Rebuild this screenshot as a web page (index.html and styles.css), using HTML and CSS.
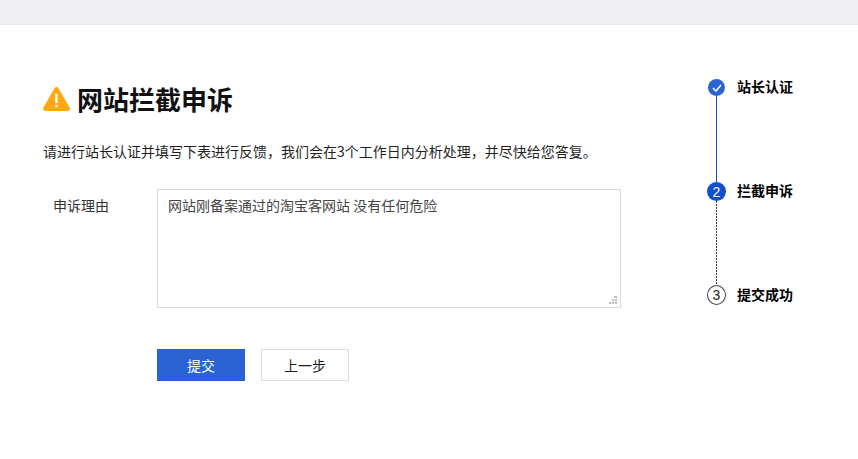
FILE: index.html
```html
<!DOCTYPE html>
<html lang="zh-CN">
<head>
<meta charset="utf-8">
<title>网站拦截申诉</title>
<link rel="stylesheet" href="styles.css">
</head>
<body>
<div class="topbar"></div>
<div class="page">
  <main class="content">
    <h1 class="title">
      <svg class="warn" width="27" height="24" viewBox="1 1.500 26 23.200"><path d="M14 1.500c-.8 0-1.500.4-1.900 1.100L1.300 21.400c-.9 1.500.2 3.300 1.900 3.300h21.600c1.700 0 2.800-1.800 1.900-3.300L15.900 2.600C15.500 1.900 14.800 1.500 14 1.500z" fill="#ffa90f"/><rect x="12.900" y="8" width="2.200" height="9" fill="#fff"/><rect x="12.900" y="18.800" width="2.200" height="2.400" fill="#fff"/></svg>
      <span>网站拦截申诉</span>
    </h1>
    <p class="intro">请进行站长认证并填写下表进行反馈，我们会在3个工作日内分析处理，并尽快给您答复。</p>
    <div class="field">
      <label class="label">申诉理由</label>
      <div class="textarea">网站刚备案通过的淘宝客网站 没有任何危险
        <svg class="grip" width="8" height="8" viewBox="0 0 8 8"><path fill="#bbb" d="M5 0h3v2H5zM3 3h2v2H3zM6 3h2v2H6zM0 6h2v2H0zM3 6h2v2H3zM6 6h2v2H6z"/></svg>
      </div>
    </div>
    <div class="actions">
      <button class="btn primary">提交</button>
      <button class="btn">上一步</button>
    </div>
  </main>
  <aside class="steps">
    <div class="step">
      <span class="dot done"><svg width="10" height="8" viewBox="0 0 10 8"><path d="M1 4l3 3 5-6" fill="none" stroke="#fff" stroke-width="1.500"/></svg></span>
      <span class="step-name">站长认证</span>
    </div>
    <div class="line solid"></div>
    <div class="step">
      <span class="dot current">2</span>
      <span class="step-name">拦截申诉</span>
    </div>
    <div class="line dashed"></div>
    <div class="step">
      <span class="dot todo">3</span>
      <span class="step-name">提交成功</span>
    </div>
  </aside>
</div>
</body>
</html>
```
FILE: styles.css
```css
* { box-sizing: border-box; }
html, body { margin: 0; padding: 0; }
body {
  width: 858px;
  height: 459px;
  overflow: hidden;
  background: #fff;
  color: #000;
  font-family: "Noto Sans CJK SC", "Liberation Sans", sans-serif;
}
.topbar {
  height: 25px;
  background: #f0f0f4;
  border-bottom: 1px solid #e6e6ea;
}
.page {
  display: flex;
  justify-content: space-between;
}
.content {
  padding: 54px 0 0 43px;
  width: 621px;
  box-sizing: content-box;
}
.title {
  display: flex;
  align-items: center;
  gap: 7px;
  height: 40px;
  margin: 0;
  font-size: 26px;
  line-height: 40px;
  font-weight: 700;
  color: #111;
}
.warn { flex: none; }
.intro {
  margin: 22px 0 0;
  font-size: 14px;
  line-height: 20px;
  color: #1f1f1f;
  white-space: nowrap;
}
.field {
  display: flex;
  margin-top: 28px;
}
.label {
  width: 114px;
  padding: 0 0 0 10px;
  font-size: 14px;
  line-height: 33px;
  color: #333;
}
.textarea {
  position: relative;
  width: 464px;
  height: 119px;
  padding: 5px 10px;
  border: 1px solid #d9d9d9;
  font-size: 14px;
  line-height: 20px;
  color: #444;
}
.grip {
  position: absolute;
  right: 3px;
  bottom: 3px;
}
.actions {
  display: flex;
  gap: 16px;
  margin: 41px 0 0 114px;
}
.btn {
  width: 88px;
  height: 32px;
  padding: 0;
  border: 1px solid #dcdcdc;
  background: #fff;
  color: #1c1c1c;
  font-family: inherit;
  font-size: 14px;
}
.btn.primary {
  background: #2b63d3;
  border-color: #2b63d3;
  color: #fff;
}
.steps {
  display: grid;
  grid-template-columns: 19px auto;
  align-content: start;
  width: 151px;
  padding-top: 54px;
  margin-left: auto;
}
.step {
  grid-column: 1 / -1;
  display: grid;
  grid-template-columns: 19px auto;
  align-items: center;
  font-size: 14px;
  font-weight: 700;
  color: #000;
}
.dot {
  display: flex;
  align-items: center;
  justify-content: center;
  justify-self: center;
  border-radius: 50%;
  font-family: "Liberation Sans", sans-serif;
  font-size: 14px;
  font-weight: 400;
}
.dot.done { width: 17px; height: 17px; background: #2b63d3; }
.dot.current { width: 19px; height: 19px; background: #0f4fd0; color: #fff; }
.dot.todo { width: 19px; height: 20px; border: 1px solid #444; color: #222; }
.step-name { margin: -2px 0 0 11px; line-height: 17px; }
.line {
  grid-column: 1;
  width: 1px;
  justify-self: center;
}
.line.solid { height: 86px; background: #0f4fd0; }
.line.dashed {
  height: 84px;
  background: repeating-linear-gradient(to bottom, #333 0 2px, transparent 2px 3px);
}
```
